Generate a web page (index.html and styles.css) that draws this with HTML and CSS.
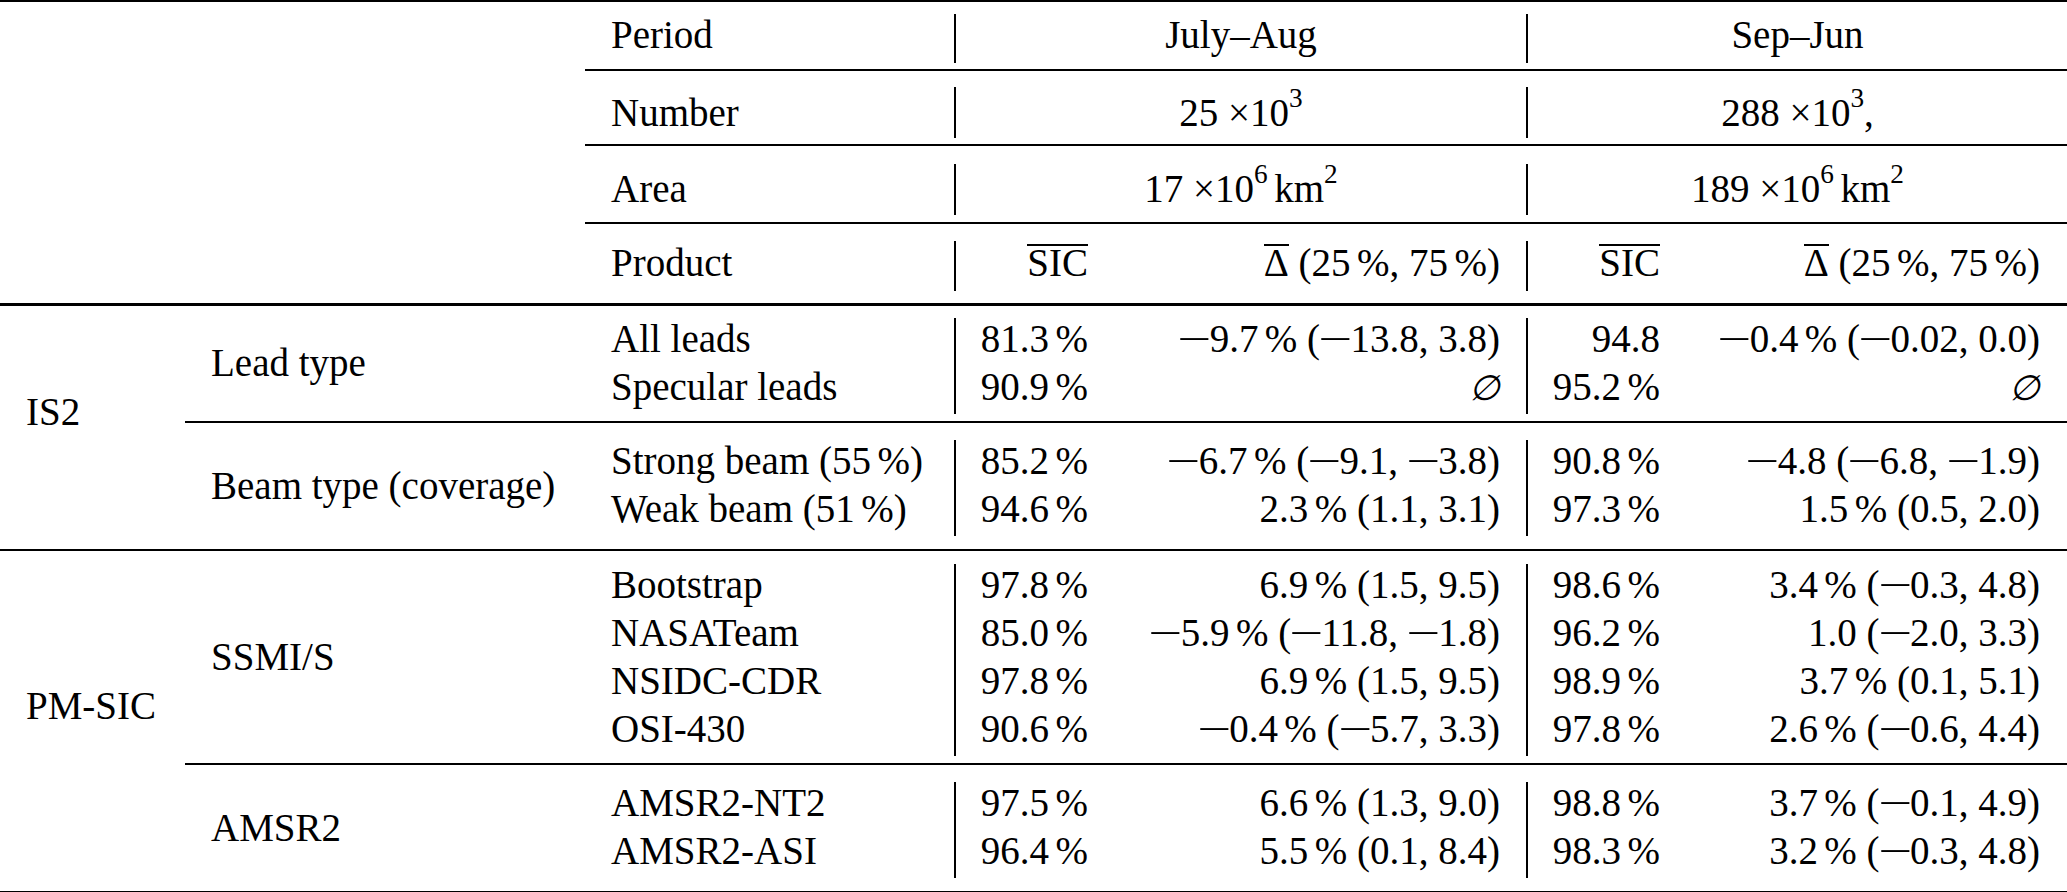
FILE: index.html
```html
<!DOCTYPE html>
<html lang="en">
<head>
<meta charset="utf-8">
<title>Lead and sea ice concentration comparison</title>
<link rel="stylesheet" href="styles.css">
</head>
<body>
<table class="tbl">
  <colgroup>
    <col class="c1"><col class="c2"><col class="c3"><col class="c4"><col class="c5"><col class="c6"><col class="c7">
  </colgroup>
  <thead>
    <tr class="h1">
      <td class="corner bt bb3" colspan="2" rowspan="4"></td>
      <td class="d pl bt bb"><div class="ln">Period</div></td>
      <td class="d cc bt bb" colspan="2"><div class="v"><div class="ln">July–Aug</div></div></td>
      <td class="d cc bt bb" colspan="2"><div class="v"><div class="ln">Sep–Jun</div></div></td>
    </tr>
    <tr class="h2">
      <td class="d pl bb"><div class="ln">Number</div></td>
      <td class="d cc bb" colspan="2"><div class="v"><div class="ln">25 ×10<sup>3</sup></div></div></td>
      <td class="d cc bb" colspan="2"><div class="v"><div class="ln">288 ×10<sup>3</sup>,</div></div></td>
    </tr>
    <tr class="h3">
      <td class="d pl bb"><div class="ln">Area</div></td>
      <td class="d cc bb" colspan="2"><div class="v"><div class="ln">17 ×10<sup>6</sup>&#8198;km<sup>2</sup></div></div></td>
      <td class="d cc bb" colspan="2"><div class="v"><div class="ln">189 ×10<sup>6</sup>&#8198;km<sup>2</sup></div></div></td>
    </tr>
    <tr class="h4">
      <td class="d pl bb3"><div class="ln">Product</div></td>
      <td class="d pr bb3"><div class="v"><div class="ln"><span class="ol">SIC</span></div></div></td>
      <td class="d pr26 bb3"><div class="ln"><span class="ol">Δ</span> (25&#8198;%, 75&#8198;%)</div></td>
      <td class="d pr bb3"><div class="v"><div class="ln"><span class="ol">SIC</span></div></div></td>
      <td class="d pr bb3"><div class="ln"><span class="ol">Δ</span> (25&#8198;%, 75&#8198;%)</div></td>
    </tr>
  </thead>
  <tbody>
    <tr class="rA">
      <td class="mid pl grp bb" rowspan="2">IS2</td>
      <td class="mid pl bb">Lead type</td>
      <td class="d pl bb"><div class="ln">All leads</div><div class="ln">Specular leads</div></td>
      <td class="d pr bb"><div class="v"><div class="ln">81.3&#8198;%</div><div class="ln">90.9&#8198;%</div></div></td>
      <td class="d pr26 bb"><div class="ln"><span class="mi">−</span>9.7&#8198;% (<span class="mi">−</span>13.8, 3.8)</div><div class="ln"><span class="es">∅</span></div></td>
      <td class="d pr bb"><div class="v"><div class="ln">94.8</div><div class="ln">95.2&#8198;%</div></div></td>
      <td class="d pr bb"><div class="ln"><span class="mi">−</span>0.4&#8198;% (<span class="mi">−</span>0.02, 0.0)</div><div class="ln"><span class="es">∅</span></div></td>
    </tr>
    <tr class="rB">
      <td class="mid pl bb">Beam type (coverage)</td>
      <td class="d pl bb"><div class="ln">Strong beam (55&#8198;%)</div><div class="ln">Weak beam (51&#8198;%)</div></td>
      <td class="d pr bb"><div class="v"><div class="ln">85.2&#8198;%</div><div class="ln">94.6&#8198;%</div></div></td>
      <td class="d pr26 bb"><div class="ln"><span class="mi">−</span>6.7&#8198;% (<span class="mi">−</span>9.1, <span class="mi">−</span>3.8)</div><div class="ln">2.3&#8198;% (1.1, 3.1)</div></td>
      <td class="d pr bb"><div class="v"><div class="ln">90.8&#8198;%</div><div class="ln">97.3&#8198;%</div></div></td>
      <td class="d pr bb"><div class="ln"><span class="mi">−</span>4.8 (<span class="mi">−</span>6.8, <span class="mi">−</span>1.9)</div><div class="ln">1.5&#8198;% (0.5, 2.0)</div></td>
    </tr>
    <tr class="rC">
      <td class="mid pl grp bb" rowspan="2">PM-SIC</td>
      <td class="mid pl bb">SSMI/S</td>
      <td class="d pl bb">
        <div class="ln">Bootstrap</div>
        <div class="ln">NASATeam</div>
        <div class="ln">NSIDC-CDR</div>
        <div class="ln">OSI-430</div>
      </td>
      <td class="d pr bb"><div class="v">
        <div class="ln">97.8&#8198;%</div>
        <div class="ln">85.0&#8198;%</div>
        <div class="ln">97.8&#8198;%</div>
        <div class="ln">90.6&#8198;%</div>
      </div></td>
      <td class="d pr26 bb">
        <div class="ln">6.9&#8198;% (1.5, 9.5)</div>
        <div class="ln"><span class="mi">−</span>5.9&#8198;% (<span class="mi">−</span>11.8, <span class="mi">−</span>1.8)</div>
        <div class="ln">6.9&#8198;% (1.5, 9.5)</div>
        <div class="ln"><span class="mi">−</span>0.4&#8198;% (<span class="mi">−</span>5.7, 3.3)</div>
      </td>
      <td class="d pr bb"><div class="v">
        <div class="ln">98.6&#8198;%</div>
        <div class="ln">96.2&#8198;%</div>
        <div class="ln">98.9&#8198;%</div>
        <div class="ln">97.8&#8198;%</div>
      </div></td>
      <td class="d pr bb">
        <div class="ln">3.4&#8198;% (<span class="mi">−</span>0.3, 4.8)</div>
        <div class="ln">1.0 (<span class="mi">−</span>2.0, 3.3)</div>
        <div class="ln">3.7&#8198;% (0.1, 5.1)</div>
        <div class="ln">2.6&#8198;% (<span class="mi">−</span>0.6, 4.4)</div>
      </td>
    </tr>
    <tr class="rD">
      <td class="mid pl bb">AMSR2</td>
      <td class="d pl bb"><div class="ln">AMSR2-NT2</div><div class="ln">AMSR2-ASI</div></td>
      <td class="d pr bb"><div class="v"><div class="ln">97.5&#8198;%</div><div class="ln">96.4&#8198;%</div></div></td>
      <td class="d pr26 bb"><div class="ln">6.6&#8198;% (1.3, 9.0)</div><div class="ln">5.5&#8198;% (0.1, 8.4)</div></td>
      <td class="d pr bb"><div class="v"><div class="ln">98.8&#8198;%</div><div class="ln">98.3&#8198;%</div></div></td>
      <td class="d pr bb"><div class="ln">3.7&#8198;% (<span class="mi">−</span>0.1, 4.9)</div><div class="ln">3.2&#8198;% (<span class="mi">−</span>0.3, 4.8)</div></td>
    </tr>
  </tbody>
</table>
</body>
</html>
```
FILE: styles.css
```css
html, body {
  margin: 0;
  padding: 0;
  background: #ffffff;
}

body {
  font-family: "Liberation Serif", "Times New Roman", "DejaVu Serif", serif;
  font-size: 39px;
  color: #000000;
}

.tbl {
  width: 2067px;
  table-layout: fixed;
  border-collapse: separate;
  border-spacing: 0;
}

.c1 { width: 185px; }
.c2 { width: 400px; }
.c3 { width: 369px; }
.c4 { width: 161px; }
.c5 { width: 411px; }
.c6 { width: 161px; }
.c7 { width: 380px; }

td {
  padding: 0;
  vertical-align: top;
  white-space: nowrap;
}

/* horizontal alignment */
.pl { padding-left: 26px; text-align: left; }
.pr { padding-right: 27px; text-align: right; }
.pr26 { padding-right: 26px; text-align: right; }
.cc { text-align: center; }

/* rules */
.bt { border-top: 2px solid #000; }
.bb { border-bottom: 2px solid #000; }
.bb3 { border-bottom: 3px solid #000; }

/* vertical bar, only as tall as the text block */
.v {
  display: flow-root;
  border-left: 2px solid #000;
}

/* one text line; pitch = line-height + margin */
.ln {
  line-height: 41.7px;
  margin-bottom: 6.3px;
}

/* vertically centred label cells */
td.mid {
  vertical-align: middle;
  line-height: 48px;
}
td.grp { padding-bottom: 30px; }

/* header rows */
.h1 > .d { padding-top: 12px; padding-bottom: 6px; }
.h1 .ln { line-height: 42.3px; margin-bottom: 6.7px; }

.h2 > .d { padding-top: 16px; padding-bottom: 6px; }
.h2 .ln { line-height: 51px; margin-bottom: 0; }

.h3 > .d { padding-top: 18px; padding-bottom: 7px; }
.h3 .ln { line-height: 49.1px; margin-bottom: 1.9px; }

.h4 > .d { padding-top: 17px; padding-bottom: 12px; }
.h4 .ln { line-height: 43.7px; margin-bottom: 6.3px; }

/* body blocks */
.rA > .d { padding-top: 12px; padding-bottom: 6px; }
.rB > .d { padding-top: 17px; padding-bottom: 13px; }
.rC > .d { padding-top: 13px; padding-bottom: 7px; }
.rD > .d { padding-top: 17px; padding-bottom: 13px; }

sup {
  font-size: 0.7em;
  line-height: 0;
  vertical-align: 19px;
}

/* overlined symbol (mean) */
.ol {
  display: inline-block;
  line-height: 33px;
  border-top: 2px solid #000;
}

/* math minus: wider than the text minus */
.mi {
  display: inline-block;
  width: 0.78em;
  text-align: center;
  transform: scaleX(1.55);
}

.es {
  font-family: "DejaVu Serif", serif;
  font-style: italic;
  font-size: 0.9em;
}
```
